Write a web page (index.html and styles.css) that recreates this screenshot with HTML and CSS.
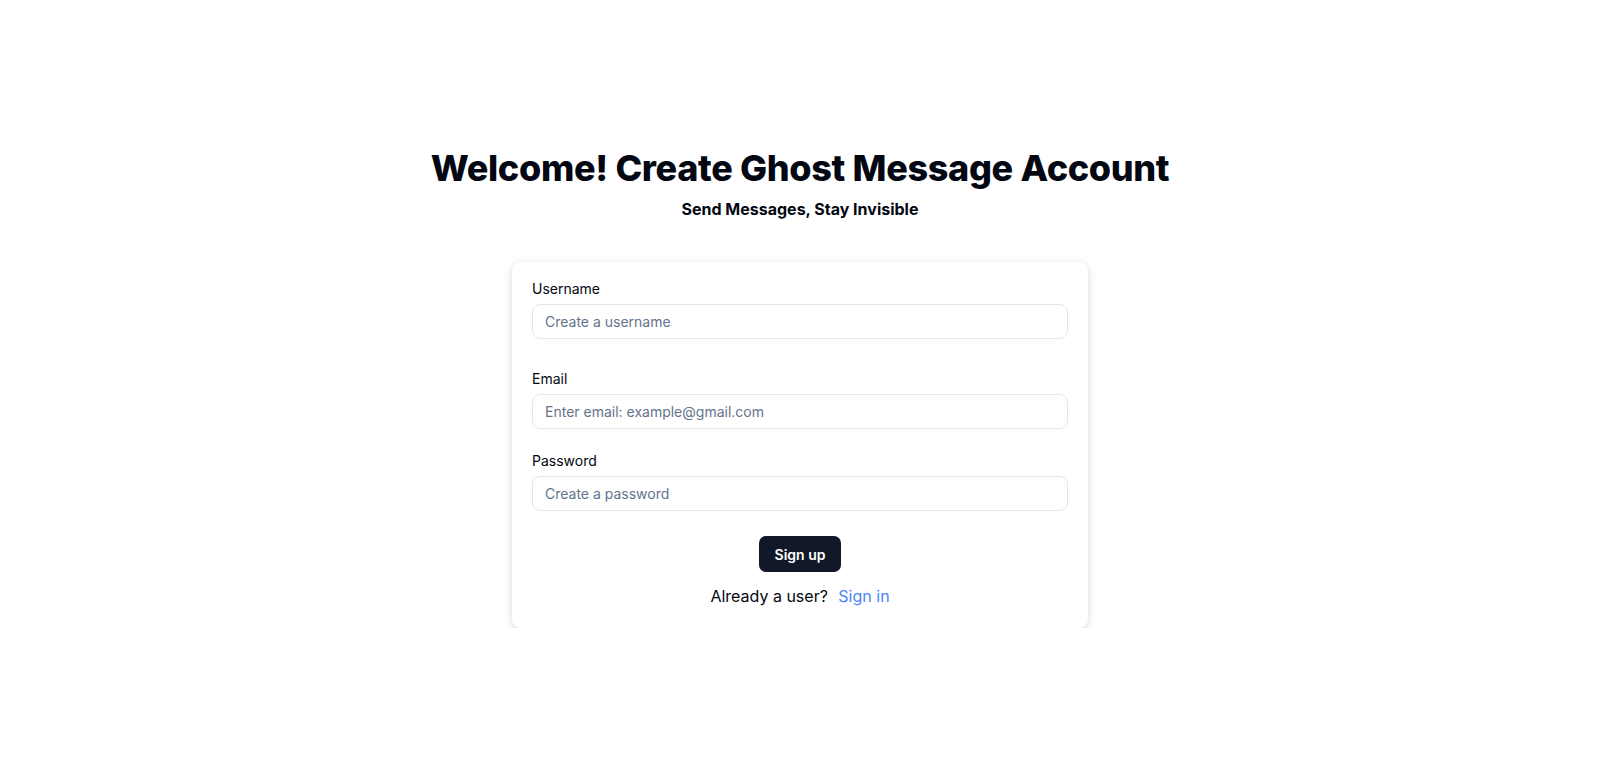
FILE: index.html
```html
<!DOCTYPE html>
<html lang="en">
<head>
<meta charset="utf-8">
<title>Sign up - Ghost Message</title>
<link rel="stylesheet" href="styles.css">
</head>
<body>
<main class="page">
  <header class="intro">
    <h1 class="title">Welcome! Create Ghost Message Account</h1>
    <p class="subtitle">Send Messages, Stay Invisible</p>
  </header>
  <form class="card">
    <div class="field field-first">
      <label class="label" for="username">Username</label>
      <input class="input" id="username" type="text" placeholder="Create a username">
    </div>
    <div class="field">
      <label class="label" for="email">Email</label>
      <input class="input" id="email" type="email" placeholder="Enter email: example@gmail.com">
    </div>
    <div class="field">
      <label class="label" for="password">Password</label>
      <input class="input" id="password" type="password" placeholder="Create a password">
    </div>
    <div class="actions">
      <button class="btn" type="button">Sign up</button>
      <p class="switch">Already a user? <a class="link" href="#">Sign in</a></p>
    </div>
  </form>
</main>
</body>
</html>
```
FILE: styles.css
```css
* { box-sizing: border-box; }
html, body { margin: 0; padding: 0; background: #ffffff; }
body {
  font-family: Inter, "Noto Sans", "Liberation Sans", sans-serif;
  color: #030712;
}
.page {
  display: flex;
  flex-direction: column;
  align-items: center;
  padding-top: 148px;
}
.intro { text-align: center; }
.title {
  margin: 0;
  font-size: 36px;
  line-height: 40px;
  font-weight: 800;
  letter-spacing: -0.33px;
  color: #030712;
}
.subtitle {
  margin: 9px 0 0;
  font-size: 16px;
  line-height: 24px;
  font-weight: 700;
  color: #030712;
}
.card {
  margin-top: 41px;
  width: 576px;
  background: #fff;
  border-radius: 8px;
  box-shadow: 0 2px 10px rgba(0, 0, 0, 0.12), 0 1px 3px rgba(0, 0, 0, 0.06);
  padding: 20px 20px 20px;
  display: flex;
  flex-direction: column;
}
.field { display: flex; flex-direction: column; margin-bottom: 25px; }
.field-first { margin-bottom: 33px; }
.label {
  font-size: 14px;
  line-height: 14px;
  font-weight: 400;
  color: #030712;
  margin-bottom: 8px;
}
.input {
  height: 35px;
  width: 100%;
  border: 1px solid #e2e8f0;
  border-radius: 8px;
  padding: 0 12px;
  font-family: inherit;
  font-size: 14px;
  color: #030712;
  background: #fff;
  outline: none;
}
.input::placeholder { color: #64748b; }
.actions {
  display: flex;
  flex-direction: column;
  align-items: center;
}
.btn {
  height: 36px;
  width: 82px;
  border: none;
  border-radius: 7px;
  background: #111827;
  color: #fff;
  font-family: inherit;
  font-size: 14px;
  font-weight: 600;
}
.switch {
  margin: 12px 0 0;
  font-size: 16px;
  line-height: 24px;
  color: #030712;
}
.link {
  margin-left: 6px;
  color: #4b85f5;
  text-decoration: none;
}
```
